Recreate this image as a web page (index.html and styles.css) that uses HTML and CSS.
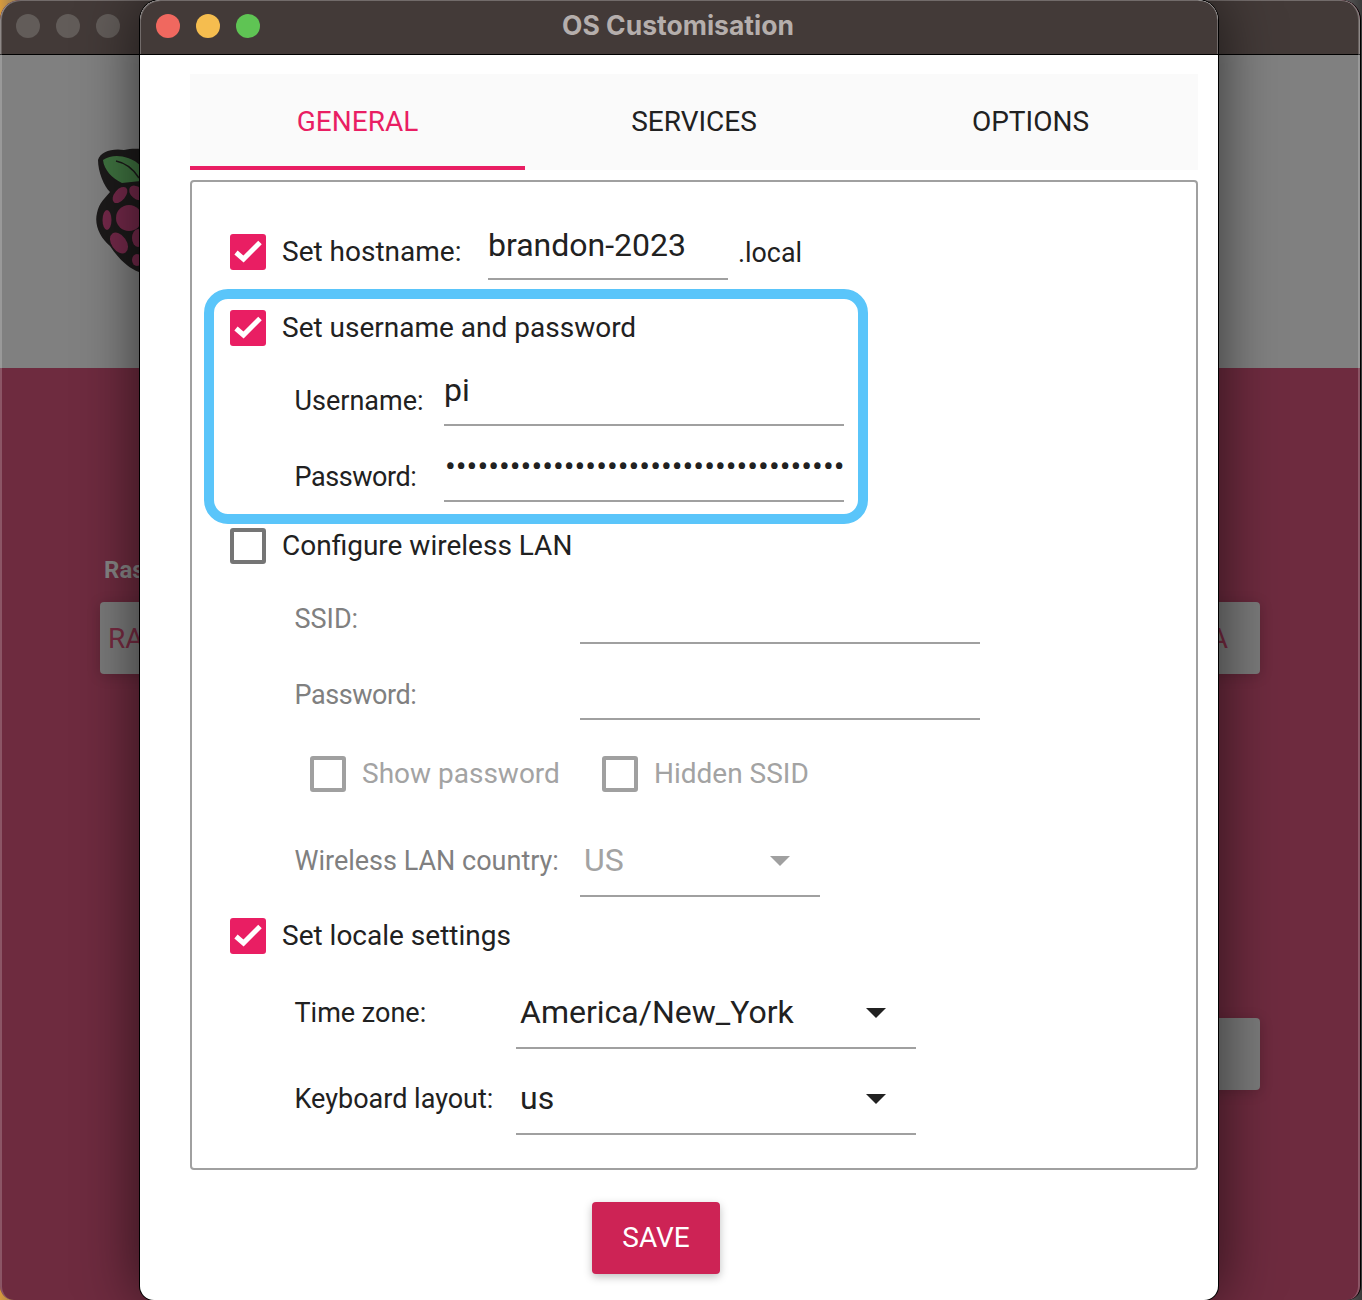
FILE: index.html
```html
<!DOCTYPE html>
<html lang="en">
<head>
<meta charset="utf-8">
<title>OS Customisation</title>
<link rel="stylesheet" href="styles.css">
</head>
<body>
<div class="desktop">
  <section class="window back-window">
    <header class="titlebar">
      <div class="lights">
        <span class="light light-off"></span>
        <span class="light light-off"></span>
        <span class="light light-off"></span>
      </div>
    </header>
    <div class="hero">
      <svg class="logo" viewBox="90 145 100 130" width="100" height="130" aria-hidden="true">
        <path d="M98 160C100 152 112 148 124 150C136 147 150 150 158 152L150 185C160 200 165 230 160 250C155 265 145 272 139 272C128 268 118 258 110 246C100 238 94 225 97 213C99 203 105 198 110 192C104 186 98 172 98 160Z" fill="#1c1a1a"/>
        <path d="M103 160C110 155 120 155 128 158C138 161 146 170 150 180L122 183C112 178 104 170 103 160Z" fill="#3f7340"/>
        <path d="M116 161C126 163 134 170 139 178" fill="none" stroke="#1c1a1a" stroke-width="1.5"/>
        <g fill="#74294a">
          <ellipse cx="120" cy="195" rx="5.5" ry="9.5" transform="rotate(40 120 195)"/>
          <ellipse cx="137" cy="193" rx="6" ry="9" transform="rotate(-50 137 193)"/>
          <circle cx="129" cy="218" r="13"/>
          <ellipse cx="107" cy="220" rx="4.5" ry="10"/>
          <ellipse cx="119" cy="243" rx="7.5" ry="11.5" transform="rotate(-35 119 243)"/>
          <ellipse cx="138" cy="238" rx="6" ry="9"/>
          <ellipse cx="137" cy="260" rx="5" ry="6"/>
        </g>
      </svg>
    </div>
    <div class="stage">
      <div class="device-label">Ras</div>
      <div class="big-button">
        <span>RA</span>
        <span>A</span>
      </div>
      <div class="write-row">
        <div class="big-button write-button"></div>
      </div>
    </div>
  </section>

  <section class="window dialog">
    <header class="titlebar">
      <div class="lights">
        <span class="light light-red"></span>
        <span class="light light-yellow"></span>
        <span class="light light-green"></span>
      </div>
      <h1 class="title">OS Customisation</h1>
    </header>

    <div class="dialog-body">
      <nav class="tabs">
        <div class="tab tab-active">GENERAL</div>
        <div class="tab">SERVICES</div>
        <div class="tab">OPTIONS</div>
      </nav>

      <div class="panel">
        <div class="highlight"></div>

        <div class="row row-check">
          <span class="check"><svg viewBox="0 0 36 36"><path d="M6 18.5L13.5 25L30 8.5"/></svg></span>
          <span class="label w-hostname">Set hostname:</span>
          <span class="field field-host">brandon-2023</span>
          <span class="label suffix">.local</span>
        </div>

        <div class="row row-check mt-16">
          <span class="check"><svg viewBox="0 0 36 36"><path d="M6 18.5L13.5 25L30 8.5"/></svg></span>
          <span class="label">Set username and password</span>
        </div>
        <div class="row row-sub mt-14">
          <span class="label sub-label field-label w-user">Username:</span>
          <span class="field field-wide">pi</span>
        </div>
        <div class="row row-sub mt-20">
          <span class="label sub-label field-label pass-label w-user">Password:</span>
          <span class="field field-wide field-dots">•••••••••••••••••••••••••••••••••••••</span>
        </div>

        <div class="row row-check mt-12">
          <span class="check check-empty"></span>
          <span class="label">Configure wireless LAN</span>
        </div>
        <div class="row row-sub mt-14 muted">
          <span class="label sub-label field-label w-wifi">SSID:</span>
          <span class="field field-wide"></span>
        </div>
        <div class="row row-sub mt-20 muted">
          <span class="label sub-label field-label pass-label w-wifi">Password:</span>
          <span class="field field-wide"></span>
        </div>
        <div class="row row-options mt-22">
          <div class="option">
            <span class="check check-disabled"></span>
            <span class="label label-disabled">Show password</span>
          </div>
          <div class="option">
            <span class="check check-disabled"></span>
            <span class="label label-disabled">Hidden SSID</span>
          </div>
        </div>
        <div class="row row-sub mt-21 muted">
          <span class="label sub-label w-wifi">Wireless LAN country:</span>
          <div class="select select-small select-disabled">
            <span>US</span><i class="caret"></i>
          </div>
        </div>

        <div class="row row-check mt-9">
          <span class="check"><svg viewBox="0 0 36 36"><path d="M6 18.5L13.5 25L30 8.5"/></svg></span>
          <span class="label">Set locale settings</span>
        </div>
        <div class="row row-sub mt-11">
          <span class="label sub-label w-locale">Time zone:</span>
          <div class="select">
            <span>America/New_York</span><i class="caret"></i>
          </div>
        </div>
        <div class="row row-sub mt-14">
          <span class="label sub-label w-locale">Keyboard layout:</span>
          <div class="select">
            <span>us</span><i class="caret"></i>
          </div>
        </div>
      </div>

      <div class="actions">
        <button class="save" type="button">SAVE</button>
      </div>
    </div>
  </section>
</div>
</body>
</html>
```

FILE: styles.css
```css
* { box-sizing: border-box; }

html, body {
  margin: 0;
  padding: 0;
  height: 1300px;
  overflow: hidden;
}

body {
  font-family: Roboto, "Liberation Sans", sans-serif;
  color: #212121;
}

.desktop {
  position: relative;
  width: 1362px;
  height: 1300px;
  overflow: hidden;
  background: linear-gradient(90deg, #d79a3c 0, #6b6b6b 2%, #6b6b6b 98%, #3a3a3a 100%);
}

.window {
  position: absolute;
  top: 0;
  height: 1300px;
  overflow: hidden;
}

.back-window {
  left: 0;
  width: 1361px;
  display: flex;
  flex-direction: column;
  border-radius: 20px 20px 14px 14px;
  border-right: 1px solid #000;
  background: #6e2b3f;
}

.back-window::after {
  content: "";
  position: absolute;
  inset: 0;
  border-left: 2px solid rgba(255, 255, 255, .2);
  border-right: 2px solid rgba(255, 255, 255, .2);
  border-radius: inherit;
  pointer-events: none;
}

.dialog {
  left: 140px;
  width: 1078px;
  background: #fff;
  border-radius: 20px 20px 14px 14px;
  box-shadow: 0 0 0 1px #000, 0 0 60px rgba(0, 0, 0, .62);
}

.titlebar {
  position: relative;
  flex: none;
  height: 55px;
  display: flex;
  align-items: flex-start;
  background: #433a38;
  border-bottom: 1px solid #000;
  border-radius: 20px 20px 0 0;
  box-shadow: inset 1px 1px 0 rgba(255, 255, 255, .25), inset -1px 0 0 rgba(255, 255, 255, .25);
}

.lights {
  display: flex;
  gap: 16px;
  padding: 14px 0 0 16px;
}

.light {
  width: 24px;
  height: 24px;
  border-radius: 50%;
}

.light-off { background: #625c59; }
.light-red { background: #f0685f; }
.light-yellow { background: #f5bd4f; }
.light-green { background: #5fc454; }

.title {
  position: absolute;
  left: 0;
  right: 0;
  top: 8px;
  margin: 0;
  text-align: center;
  font-family: Inter, Roboto, sans-serif;
  font-size: 26.5px;
  line-height: 34px;
  font-weight: 700;
  color: #b5aeac;
  padding-right: 2px;
}

.hero {
  flex: none;
  height: 313px;
  background: #808080;
  padding: 90px 0 0 90px;
}

.logo { display: block; }

.stage {
  flex: 1;
  padding: 186px 100px 0 100px;
}

.device-label {
  height: 48px;
  padding-left: 4px;
  font-size: 24px;
  line-height: 32px;
  font-weight: 700;
  color: #868686;
}

.big-button {
  height: 72px;
  border-radius: 4px;
  background: #7a7a7a;
  padding: 0 32px 0 8px;
  display: flex;
  align-items: center;
  justify-content: space-between;
  font-size: 28px;
  color: #772a41;
  box-shadow: 0 2px 14px rgba(0, 0, 0, .18);
}

.write-row {
  display: flex;
  justify-content: flex-end;
  margin-top: 344px;
}

.write-button { width: 240px; }

.dialog-body {
  padding: 19px 20px 0 50px;
}

.tabs {
  display: grid;
  grid-template-columns: 335px 338px 335px;
  height: 96px;
  background: #fafafa;
}

.tab {
  display: flex;
  align-items: center;
  justify-content: center;
  font-size: 28px;
  padding-top: 2px;
  border-bottom: 4px solid transparent;
  color: #212121;
}

.tab-active {
  color: #e91e63;
  border-bottom-color: #e91e63;
}

.panel {
  position: relative;
  height: 990px;
  margin-top: 10px;
  padding: 40px 0 0 0;
  border: 2px solid #a0a0a0;
  border-radius: 4px;
}

.highlight {
  position: absolute;
  left: 12px;
  top: 107px;
  width: 664px;
  height: 235px;
  border: 10px solid #5ac5fa;
  border-radius: 24px;
  pointer-events: none;
}

.row {
  display: flex;
  align-items: center;
  font-size: 28px;
}

.row-check { height: 60px; padding-left: 38px; }
.row-sub { padding-left: 103px; }
.row-options { height: 60px; padding-left: 118px; }

.mt-9 { margin-top: 9px; }
.mt-11 { margin-top: 11px; }
.mt-12 { margin-top: 12px; }
.mt-14 { margin-top: 14px; }
.mt-16 { margin-top: 16px; }
.mt-20 { margin-top: 20px; }
.mt-21 { margin-top: 21px; }
.mt-22 { margin-top: 22px; }

.check {
  flex: none;
  width: 36px;
  height: 36px;
  margin-right: 16px;
  border-radius: 3px;
  background: #e91e63;
}

.check svg {
  display: block;
  width: 36px;
  height: 36px;
}

.check path {
  fill: none;
  stroke: #fff;
  stroke-width: 5;
}

.check-empty {
  background: #fff;
  border: 4px solid #757575;
}

.check-disabled {
  background: #fff;
  border: 4px solid #a0a0a0;
}

.label {
  flex: none;
  font-size: 28px;
  line-height: 36px;
  color: #212121;
}

.sub-label {
  font-size: 27px;
  margin-left: -.5px;
}

.field-label { padding-top: 2px; }
.pass-label { letter-spacing: -.45px; }

.label-disabled { color: #a3a3a3; }
.muted .label { color: #808080; }

.w-hostname { width: 206px; }
.w-user { width: 149.5px; }
.w-wifi { width: 285.5px; }
.w-locale { width: 221.5px; }

.suffix {
  margin-left: 10px;
  padding-top: 2px;
  font-size: 26.8px;
}

.field {
  flex: none;
  display: block;
  height: 54px;
  margin-bottom: 2px;
  border-bottom: 2px solid #a0a0a0;
  font-size: 32px;
  line-height: 36px;
  color: #212121;
}

.field-wide { width: 400px; }

.field-host {
  width: 240px;
  height: 58px;
  line-height: 46px;
}

.field-dots {
  padding-left: 1px;
  white-space: nowrap;
}

.option {
  display: flex;
  align-items: center;
  width: 292px;
}

.select {
  flex: none;
  width: 400px;
  height: 72px;
  padding: 0 30px 0 4px;
  display: flex;
  align-items: center;
  justify-content: space-between;
  border-bottom: 2px solid #a0a0a0;
  font-size: 32px;
  color: #212121;
}

.select-small { width: 240px; }
.select-disabled { color: #a3a3a3; }

.caret {
  width: 0;
  height: 0;
  margin-top: 2px;
  border-left: 10px solid transparent;
  border-right: 10px solid transparent;
  border-top: 10px solid #212121;
}

.select-disabled .caret { border-top-color: #a0a0a0; }

.actions {
  display: flex;
  margin-top: 32px;
  padding-left: 402px;
}

.save {
  width: 128px;
  height: 72px;
  padding: 0 0 2px;
  border: 0;
  border-radius: 4px;
  background: #cd2355;
  color: #fff;
  font-family: Roboto, "Liberation Sans", sans-serif;
  font-size: 28px;
  box-shadow: 0 3px 8px rgba(0, 0, 0, .25);
}
```
